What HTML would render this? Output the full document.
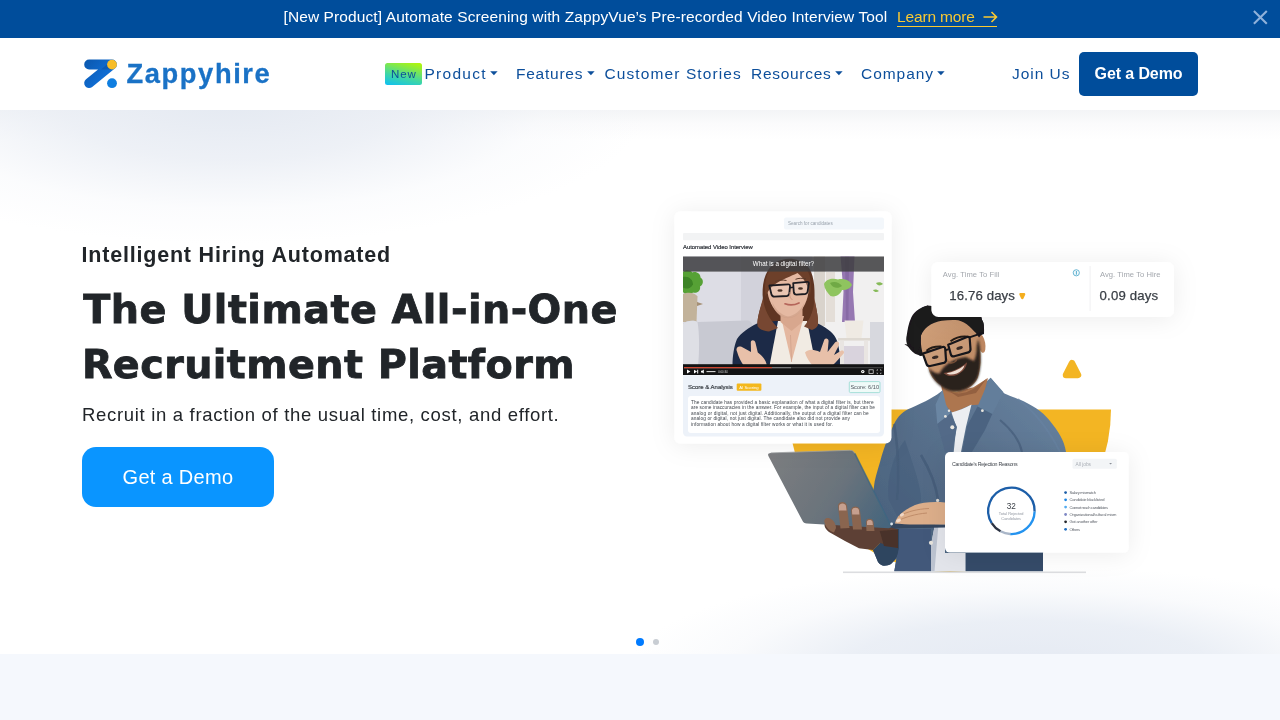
<!DOCTYPE html>
<html lang="en"><head><meta charset="utf-8"><title>Zappyhire</title>
<style>
*{box-sizing:border-box;margin:0;padding:0}
html,body{width:1280px;height:720px;overflow:hidden;background:#fff;font-family:"Liberation Sans",sans-serif;color:#212529}
.abs{position:absolute}
#hero,#nav,#banner,#below{will-change:transform}
#banner{position:absolute;left:0;top:0;width:1280px;height:38px;background:#004d9b;color:#fff}
#banner .t{position:absolute;left:283.5px;top:8px;font-size:15.5px;line-height:18px;white-space:nowrap;letter-spacing:0.1px}
#banner .lm{position:absolute;left:897px;top:8px;font-size:15.5px;line-height:18px;color:#f9c932;white-space:nowrap;border-bottom:1.5px solid #f9c932;height:19px;width:100px;letter-spacing:-0.15px}
#nav{position:absolute;left:0;top:38px;width:1280px;height:72px;background:#fff}
.ni{position:absolute;top:26.5px;font-size:15.5px;line-height:18px;color:#0d4f9b;white-space:nowrap}
.caret{position:absolute;top:6px;width:8px;height:5px;margin-left:-0.7px}
#hero{position:absolute;left:0;top:110px;width:1280px;height:544px;overflow:hidden;background:
radial-gradient(ellipse 400px 100px at 1030px 556px, rgba(229,234,243,1) 0%, rgba(231,236,244,.85) 45%, rgba(240,243,248,.38) 75%, rgba(255,255,255,0) 100%),
radial-gradient(ellipse 420px 140px at 230px -6px, rgba(229,234,242,1) 0%, rgba(233,237,244,.8) 40%, rgba(244,246,250,.35) 75%, rgba(255,255,255,0) 100%),
linear-gradient(180deg,#f3f4f6 0px,#fbfbfc 14px,#fff 30px),#fff}
#below{position:absolute;left:0;top:654px;width:1280px;height:66px;background:#f5f8fd}
</style></head><body>
<div id="banner">
 <div class="t">[New Product] Automate Screening with ZappyVue&rsquo;s Pre-recorded Video Interview Tool</div>
 <div class="lm">Learn more</div>
 <svg class="abs" style="left:983px;top:11px" width="15" height="12" viewBox="0 0 15 12"><path d="M0.5 6H13.5M8.5 1L13.5 6L8.5 11" stroke="#f9c932" stroke-width="1.6" fill="none"/></svg>
 <svg class="abs" style="left:1252px;top:8.5px" width="17" height="17" viewBox="0 0 17 17"><path d="M1.9 1.9L14.8 14.8M14.8 1.9L1.9 14.8" stroke="#8fb1da" stroke-width="2.1" fill="none"/></svg>
</div>
<div id="nav">
 <svg class="abs" style="left:80px;top:18px" width="44" height="36" viewBox="80 56 44 36">
  <defs><linearGradient id="lg1" x1="84" y1="60" x2="117" y2="88" gradientUnits="userSpaceOnUse"><stop offset="0" stop-color="#0b57ad"/><stop offset="0.55" stop-color="#0f6bd0"/><stop offset="1" stop-color="#1273dc"/></linearGradient></defs>
  <path d="M89.1 64.5H112L89.1 83.1" fill="none" stroke="url(#lg1)" stroke-width="9.8" stroke-linecap="round" stroke-linejoin="round"/>
  <path d="M101 69.4L107 64.5L112 69.4Z" fill="#0a3f86" opacity=".35"/><circle cx="112" cy="64.6" r="4.9" fill="#f8bd27"/>
  <circle cx="112" cy="83.2" r="4.9" fill="#0f7ee0"/>
 </svg>
 <div id="logot" class="abs" style="left:126.5px;top:20.5px;font-size:27.3px;line-height:30px;font-weight:700;color:#1a72c6;letter-spacing:1.6px;-webkit-text-stroke:0.3px #1a72c6;white-space:nowrap">Zappyhire</div>
 <div class="abs" id="newb" style="left:385px;top:25px;width:37px;height:22px;border-radius:2.5px;background:linear-gradient(14deg,#0cbff5 0%,#3fd6a5 38%,#7fe84e 70%,#b8f700 100%);color:#0d4f9b;font-size:11.5px;line-height:22px;text-align:center;letter-spacing:0.9px;text-indent:0.9px">New</div>
 <div class="ni" id="n1" style="left:424.5px;letter-spacing:1.27px">Product<svg class="caret" style="left:66px" viewBox="0 0 8 5"><path d="M0.2 0.3H7.6L3.9 4.3Z" fill="#0d4f9b"/></svg></div>
 <div class="ni" id="n2" style="left:516px;letter-spacing:0.76px">Features<svg class="caret" style="left:71.5px" viewBox="0 0 8 5"><path d="M0.2 0.3H7.6L3.9 4.3Z" fill="#0d4f9b"/></svg></div>
 <div class="ni" id="n3" style="left:604.5px;letter-spacing:1.1px">Customer Stories</div>
 <div class="ni" id="n4" style="left:751px;letter-spacing:0.71px">Resources<svg class="caret" style="left:85px" viewBox="0 0 8 5"><path d="M0.2 0.3H7.6L3.9 4.3Z" fill="#0d4f9b"/></svg></div>
 <div class="ni" id="n5" style="left:861px;letter-spacing:0.95px">Company<svg class="caret" style="left:77px" viewBox="0 0 8 5"><path d="M0.2 0.3H7.6L3.9 4.3Z" fill="#0d4f9b"/></svg></div>
 <div class="ni" id="n6" style="left:1012px;letter-spacing:0.97px">Join Us</div>
 <div class="abs" id="navbtn" style="left:1079px;top:14px;width:119px;height:44px;border-radius:5px;background:#004d9b;color:#fff;font-size:16px;font-weight:700;line-height:44px;text-align:center;letter-spacing:-0.1px">Get a Demo</div>
</div>
<div id="hero">
<svg class="abs" id="art" style="left:640px;top:0" width="640" height="544" viewBox="640 110 640 544" font-family="'Liberation Sans',sans-serif">
<defs>
 <filter id="sh" x="-40%" y="-40%" width="180%" height="180%"><feDropShadow dx="0" dy="2" stdDeviation="12" flood-color="#10141c" flood-opacity="0.075"/></filter>
 <filter id="soft" x="-5%" y="-5%" width="110%" height="110%"><feGaussianBlur stdDeviation="0.45"/></filter>
 <filter id="bsoft" x="-10%" y="-10%" width="120%" height="120%"><feGaussianBlur stdDeviation="0.9"/></filter>
 <filter id="soft2" x="-5%" y="-5%" width="110%" height="110%"><feGaussianBlur stdDeviation="0.4"/></filter>
 <clipPath id="vclip"><rect x="683" y="256.5" width="201" height="118.5"/></clipPath>
 <linearGradient id="lapg" x1="775" y1="455" x2="885" y2="525" gradientUnits="userSpaceOnUse"><stop offset="0" stop-color="#7b7d80"/><stop offset="0.55" stop-color="#6a737b"/><stop offset="1" stop-color="#46657d"/></linearGradient>
 <linearGradient id="shirtg" x1="1050" y1="395" x2="890" y2="560" gradientUnits="userSpaceOnUse"><stop offset="0" stop-color="#67819e"/><stop offset="0.45" stop-color="#58708c"/><stop offset="1" stop-color="#48607b"/></linearGradient>
 <linearGradient id="skin1" x1="925" y1="325" x2="980" y2="385" gradientUnits="userSpaceOnUse"><stop offset="0" stop-color="#cf9f79"/><stop offset="1" stop-color="#b8845e"/></linearGradient>
</defs>
<!-- YELLOW -->
<path id="yel" d="M789 409.5H1111A161 162.5 0 0 1 789 409.5Z" fill="#f3b523"/>
<!-- PERSON -->
<g id="person" filter="url(#soft)">
 <!-- shirt body -->
 <path d="M942.5 390.6C936 396 925 402 911.6 407.8C903 411 897.8 416.4 894 424C889 434 884 447.3 880 462C877 472 874.5 480 873.9 487C873 493 872 497 874 503L886 527L880 543L873 550L878 562C880 564.5 882 565.7 884 565.7C887 565.7 889 565 891 564L896.5 558.5L895.7 563L894.3 571.3H1043V553L1066 452C1064 440 1059 432 1049 419.8C1043 412 1032 404.4 1018 399C1010 396 1003 393 1002.7 392.3L990.6 377.7L975 392L955 400Z" fill="url(#shirtg)"/>
 <!-- darker lower-left body / sleeve -->
 <path d="M886 527L899 529L899 548C899 554 897 558 891 564C889 565 887 565.7 884 565.7C882 565.7 880 564.5 878 562L873 550L880 543Z" fill="#2f445f"/>
 <path d="M899 529H931L931 571.3H894.3L895.7 563L899 548Z" fill="#42597a"/>
 <path d="M965.5 553H1043V571.3H965.5Z" fill="#364c69"/>
 <!-- tee bottom -->
 <path d="M935 524H945V553H965.5V571.3H931V545Z" fill="#e3e5eb"/>
 <path d="M935 524H938.5L934.5 571.3H931V545Z" fill="#bcc3d0"/>
 <!-- neck -->
 <path d="M941 384L956.3 391.5L973.4 387.2L988 378L981 404.4L970 405.2L952.8 413L944 404Z" fill="#ad7650"/>
 <path d="M943 387C952 396 966 396 980 384L987 378L976 393L958 397Z" fill="#7d4e33" opacity=".55"/>
 <!-- white tee top -->
 <path d="M951.5 412.5C958 411 965 408 971.5 404.5L966 426.7L961 452H953.7L956.3 426.7Z" fill="#eceef1"/>
 <!-- collar -->
 <path d="M942.5 389.5L935.6 404.4L937.3 424L950.5 413.5L946 404.4Z" fill="#6b86a3"/>
 <path d="M990.6 377.7L1003.5 392.3L992.3 414L977.5 406.5L984.5 390.6Z" fill="#637e9b"/>
 <path d="M937.3 424L950.5 413.5L957 427L952 452H945Z" fill="#526b88"/>
 <path d="M977.5 406.5L992.3 414L985 430L972 452H962L967 426Z" fill="#4c6481"/>
 <!-- shirt folds -->
 <path d="M894 424C897 440 900 470 897 500" stroke="#3d5572" stroke-width="2.5" fill="none" opacity=".5"/>
 <path d="M1018 399C1035 412 1050 432 1060 452" stroke="#6884a3" stroke-width="2" fill="none" opacity=".5"/>
 <path d="M1000 420C1012 430 1020 442 1022 452" stroke="#3b526f" stroke-width="2" fill="none" opacity=".5"/>
 <path d="M905 440C915 470 922 490 921 502L897 516L889 500C886 480 893 455 905 440Z" fill="#435c7a" opacity=".5"/>
 <path d="M921 455C930 470 936 485 938 500" stroke="#3a506d" stroke-width="2.5" fill="none" opacity=".5"/>
 <!-- buttons -->
 <circle cx="945.4" cy="416.4" r="1.4" fill="#e9e6df"/><circle cx="949" cy="410.7" r="1.2" fill="#e9e6df"/><circle cx="982.4" cy="410.7" r="1.4" fill="#e9e6df"/><circle cx="952.3" cy="427.3" r="2" fill="#ece9e2"/><circle cx="931" cy="542.8" r="2.1" fill="#e6e3dc"/><circle cx="937.6" cy="500.4" r="1.6" fill="#d9d6cf"/>
 <!-- ear -->
 <ellipse cx="981.6" cy="343.5" rx="3.6" ry="9.5" fill="#bd8660" transform="rotate(-10 981.6 343.5)"/>
 <!-- hair back -->
 <path d="M931.7 306.1L927.8 305.6C921 307 915 311 911.5 317C908.5 323 907.5 330 906.8 335C906 338 906 341 907 344C908.5 348 911.5 351.5 915 353.8L921 356L984 334C984.3 328 984 323 982 320L980 312H931.7Z" fill="#1c1a1e"/>
 <!-- face -->
 <path d="M920.8 336C922 329 927 323.5 934 321C942 318.8 952 318.5 960 320C968 322 974 327 977.5 334C980 341 981 352 980.6 362.5C980 369 979 374 977.8 377.8C976 382 973 385 969.4 387.5C965 390.5 960 391.7 955.6 391.7C950 391.5 945.5 389 941.7 386.1C938 383.5 935 381 932.6 377.8C930.5 374.5 929 371 927.8 366.7C925 361 923 356 922.2 351.4C921 346 920.5 341 920.8 336Z" fill="url(#skin1)"/>
 <!-- beard (soft) -->
 <g filter="url(#bsoft)">
  <path d="M928.5 368C930 373 932 377 934.5 380C938 384.5 943 388.5 949 390.5C954 392 960 391.5 965 389.5C971 387 975.5 382.5 978 377C980 371 981 363 980.5 355C980.3 349 979.5 343 978 339L976.6 347C976.8 352 976 357 974 361C971 359.8 968.5 358.2 966 357.2C961 357.3 955 359.5 949.5 362.8C945 365.5 941.5 369.5 939.5 373.5C935.5 373.5 931.5 371.5 928.5 368Z" fill="#2b201c"/>
  <path d="M940.5 372.5C944 366.5 950 362 957 359.5C961 358.2 964.5 357.5 967.5 358L968.5 362.5C961 364 952 368 944 374.5Z" fill="#2b201c"/>
 </g>
 <!-- mouth -->
 <path d="M943.5 373C951 372.3 960 368.5 967 362.3C966.5 367.5 963 372 957.5 374.8C952.5 377 946.5 376.5 943.5 373Z" fill="#7c4a3c"/>
 <path d="M946.5 373.3C952.5 372.3 959 369.5 964.5 365.2C963.8 368.6 961 371.6 956.8 373.4C952.8 375 948.7 374.9 946.5 373.3Z" fill="#efdfd3"/>
 <!-- nose shading -->
 <path d="M946.5 350C945.5 356 946 361 949.5 362.7C952.5 363.5 955.5 362 957 359.5" stroke="#9a6644" stroke-width="1.4" fill="none" opacity=".65"/>
 <!-- hair front -->
 <path d="M920.8 345L920.8 336C922.5 331.5 925 328.5 927.8 326.4C932 323.5 937 321.5 941.7 320.8C947 320 953 320 958.3 320.2C962 321 966 323.5 969.4 326.4C972 329 974 331 975.7 332.7L979 337.5L983.5 332C984.3 326 984 322 982 320L980 312H931.7L927.8 305.6C919 308 913 315 910.5 323C908 331 907.5 339 911 346L917 352.5Z" fill="#1c1a1e"/>
 <path d="M913.5 348C910 345 906.5 343.5 904.5 344.5C907 345.5 910 348 913 351.5Z" fill="#1c1a1e"/>
 <!-- eyes & brows -->
 <path d="M926.5 350.8C930 347.8 936 346.3 941.5 346.6" stroke="#241a16" stroke-width="2" fill="none"/>
 <path d="M950.5 341.2C955.5 337.7 962 336 968 336.8" stroke="#241a16" stroke-width="2" fill="none"/>
 <ellipse cx="935.2" cy="357.3" rx="3.3" ry="1.6" fill="#2a1c16" transform="rotate(-14 935.2 357.3)"/>
 <ellipse cx="959.6" cy="348" rx="3.3" ry="1.6" fill="#2a1c16" transform="rotate(-16 959.6 348)"/>
 <!-- glasses -->
 <g fill="rgba(255,255,255,0.07)" stroke="#17161a" stroke-width="2.2" stroke-linejoin="round">
  <path d="M922.8 353.6L942.6 347C944.1 346.6 945 347.3 945.2 348.7L946 360C946 361.5 945.3 362.5 943.8 362.9L930.2 366C928.2 366.4 927 365.7 926.5 363.9Z"/>
  <path d="M948.2 344.8L967 337C968.5 336.5 969.4 337.1 969.7 338.5L970.5 349.3C970.5 350.8 969.8 351.8 968.3 352.4L954.3 356.3C952.4 356.7 951.2 356 950.8 354.2Z"/>
 </g>
 <path d="M945.3 350.3L948.6 349.1M968.8 337.6L983.3 332.6M923 353.6L919.5 355" stroke="#17161a" stroke-width="1.9" fill="none"/>
 <!-- laptop base -->
 <path d="M888 523.5L945 524.3V527.6L892 528.6Z" fill="#34465e"/>
 <!-- right hand (typing) -->
 <path d="M895 523.5C896 517 902 511 915 505C922 502.5 932 501.5 945 502.5V524.5H915C908 524.5 900 524 895 523.5Z" fill="#dcae8a"/>
 <path d="M897 521C906 517 915 514 927 513M899 516C908 511.5 917 509 929 508.5" stroke="#b98462" stroke-width="1" fill="none" opacity=".8"/>
 <ellipse cx="898.5" cy="520.5" rx="2.6" ry="1.7" fill="#f3dccb" transform="rotate(-25 898.5 520.5)"/>
 <ellipse cx="902" cy="514.8" rx="2.2" ry="1.5" fill="#f0d6c4" transform="rotate(-30 902 514.8)"/>
 <!-- left hand palm (below lid) -->
 <path d="M825 521C823.5 525 825 529 829 532L845 541L859 548.3L873 550L880 543L898 548V529.5L889 527L835 524Z" fill="#5d4034"/>
 <path d="M879.7 531L898 529.5V548L884 546Z" fill="#4a3229"/>
 <!-- laptop lid -->
 <path d="M770.8 452.9L849.8 450.3C852.3 450.3 853.7 451.2 854.7 453.3L890.7 525C891.6 527 890.6 528.3 888.5 528.2L807 523.5C804.6 523.3 803.2 522.4 802.2 520.2L768.4 456C767.5 454.1 768.5 453 770.8 452.9Z" fill="url(#lapg)"/>
 <path d="M854.7 453.3L890.7 525" stroke="#3f6782" stroke-width="1.6" fill="none" opacity=".8"/>
 <path d="M770.8 452.9L849.8 450.3C852.3 450.3 853.7 451.2 854.7 453.3" stroke="#a1a3a5" stroke-width=".8" fill="none"/>
 <circle cx="891.6" cy="524" r="1.4" fill="#dfe5ea"/>
 <!-- left hand fingers (over lid) -->
 <g fill="#8a6550">
  <path d="M824.5 522.5C823.5 519 826.5 517 830 518.5C833.5 520 836 524 836 528L834 532.5C830 531.5 826 528 824.5 522.5Z"/>
  <path d="M838 506C838 500.5 846.5 500.5 847 506L849.5 528L840.5 528.5Z"/>
  <path d="M851 510.5C851 505 859.5 505 860 510.5L862 529.5L853 529.5Z"/>
  <path d="M866 522C866 517.5 873 517.5 873.5 522L874.5 531L866.5 531Z"/>
 </g>
 <path d="M839 506C839.3 502.5 845.7 502.5 846 506L846.5 510.5H839ZM852 510.3C852.3 507 858.7 507 859 510.3L859.4 514.5H852.2ZM867 521.8C867.2 519.3 872 519.3 872.5 521.8L872.9 525H867Z" fill="#c6a08f"/>
</g>
<!-- floor line -->
<rect x="843" y="571.5" width="243" height="1.6" fill="#dcdde0"/>
<!-- CARD 1 -->
<g id="card1">
 <rect x="674.5" y="211.5" width="217" height="232" rx="6" fill="#fff" filter="url(#sh)"/>
 <rect x="784" y="217.5" width="100" height="12" rx="2" fill="#f3f7fb"/>
 <text x="788" y="225.2" font-size="4.6" fill="#9aa3ad">Search for candidates</text>
 <rect x="683" y="233" width="201" height="7.2" rx="1" fill="#f2f3f4"/>
 <text x="683" y="249.2" font-size="5.9" fill="#2d3138" stroke="#2d3138" stroke-width=".18" textLength="69.7" lengthAdjust="spacing">Automated Video Interview</text>
 <g clip-path="url(#vclip)">
  <g filter="url(#soft2)">
  <rect x="680" y="254" width="207" height="124" fill="#dddde5"/>
  <rect x="741" y="254" width="40" height="75" fill="#d2d2db"/>
  <rect x="812" y="254" width="75" height="124" fill="#f1f0f0"/>
  <rect x="814" y="256" width="11" height="70" fill="#cfc6bc" opacity=".7"/>
  <rect x="826" y="272" width="9" height="50" fill="#e4ded8"/>
  <!-- curtain -->
  <path d="M840.5 256H854.5L853 292L855 322H842L843.5 292Z" fill="#9678b2"/>
  <path d="M845 256H849L848.5 321H846Z" fill="#7f609d" opacity=".6"/>
  <!-- right plant -->
  <path d="M824 284C826 279 833 277.5 838 279.5C843 278 850 280 852 285C850 289 846 290.5 842 290C840 295 835 297.5 830.5 296C827 292.5 824.5 289 824 284Z" fill="#8fc45e"/>
  <path d="M830 283C834 281 839 282 842 286C838 289 833 288.5 830 283Z" fill="#6fa944"/>
  <path d="M876 283C878.5 281.5 881.5 282 883 284C880.5 286 877.5 286 876 283ZM873 290C875 289 877.5 289.5 879 291C877 292.5 874.5 292.5 873 290Z" fill="#86ba58"/>
  <!-- right furniture -->
  <path d="M844.5 320.5H863.5L861.5 338.5H846.5Z" fill="#efeae3"/>
  <rect x="838" y="338" width="32" height="2.6" fill="#ded9d2"/>
  <rect x="840" y="340.6" width="4" height="24" fill="#e9e5e2"/><rect x="864" y="340.6" width="4" height="24" fill="#e9e5e2"/>
  <rect x="844" y="346" width="20" height="18" fill="#d9d3dd"/>
  <rect x="870" y="322" width="17" height="43" fill="#d7d8de"/>
  <!-- left plant + basket -->
  <path d="M683 272C686 269.5 690 270 692.5 272.5C696 271 700.5 273.5 700.5 277.5C704 279.5 703.5 285 700 286.5C701 290.5 697 294 693 292.5C690 295.5 685 295 683 292Z" fill="#57a135"/>
  <path d="M683 277C688 275.5 693 279 693 284.5C690.5 289 685.5 289.5 683 287.5Z" fill="#3c8425"/>
  <path d="M683 294C688 291.5 695.5 292.5 697.5 296.5L696.5 322H683Z" fill="#c2b29a"/>
  <path d="M697 302L703 304L697 306Z" fill="#a58f74"/>
  <!-- sofa -->
  <path d="M683 324C686 320.5 694 320 698 322L747 320.5C750.5 320.5 752.5 323 752.5 327V366H683Z" fill="#c8c9d2"/>
  <path d="M683 324C686 320.5 694 320 697.5 322C699.5 333 699.5 352 698 366H683Z" fill="#dedfe5"/>
  <!-- woman hair back -->
  <path d="M763 300C761.5 286 764 271 774 263.5C784 256.5 799 257.5 807 265.5C814 273 815 287 814.5 300C816 308 818.5 316 818 325C815 329 809 330.5 803 328L790 322L776 329C769 332 761 330 757.5 326C757 317 760.5 308 763 300Z" fill="#5e3523"/>
  <!-- blazer -->
  <path d="M757 323.6C749 327.5 741 333 737 339C734 346 732.5 356 732.5 366H840C840 360 840 356 839.5 352C838.5 345 837 339 834 335.3C830 330 823.5 326.5 817.8 323.6L800 321H775Z" fill="#1d2b46"/>
  <!-- blouse -->
  <path d="M778 321L807 321L816 366H769.5Z" fill="#f1ebe3"/>
  <!-- chest skin V -->
  <path d="M780.8 316L804 316L791.5 362Z" fill="#e4b79f"/>
  <path d="M791.5 362L790.5 335" stroke="#c99a84" stroke-width=".6" fill="none"/>
  <!-- neck -->
  <path d="M780.5 308H802.5V322L791.5 331L780.5 322Z" fill="#d8a78e"/>
  <!-- face -->
  <path d="M767.3 289C767 277.5 775.5 269.5 788 269.5C800.5 269.5 809 277.5 808.7 289C808.3 299.5 803.5 309.5 797 314.5C792 318.3 784.5 318.3 779.5 314.5C773 309.5 767.7 299.5 767.3 289Z" fill="#e5b9a2"/>
  <path d="M772 302C776 310 781 315 788 316.5C795 315.5 800.5 310.5 804.5 302.5C802.5 311 797.5 317.5 788 318.3C779 317.5 774 311 772 302Z" fill="#cf9f88" opacity=".7"/>
  <!-- hair front -->
  <path d="M765.5 296C763 281 767.5 267.5 779 263C791 259 805.5 263.5 809.5 275C811.5 282 811 290 810 296C808.5 286.5 804.5 278.5 797.5 273C791.5 276 781.5 279.5 774.5 284.5C770 288 767.5 292 765.5 296Z" fill="#6d3f2a"/>
  <path d="M763 298C764 308 768 318 778 328L769 331.5C763 331 759 329 757.5 326C757 317 760.5 308 763 298Z" fill="#774730"/>
  <path d="M814.5 298C814 309 811 318 804 326.5L812 330C815 329 817 327 818 325C818.5 316 816 308 814.5 298Z" fill="#774730"/>
  <!-- glasses -->
  <g fill="rgba(255,255,255,0.18)" stroke="#1e1d22" stroke-width="1.8" stroke-linejoin="round">
   <path d="M769.3 285.5L788.3 284.3C789.5 284.3 790.1 284.9 790 286.1L789.3 293.6C789.1 295 788.3 295.8 786.9 296L774.5 296.6C772.8 296.6 771.8 295.8 771.4 294.2Z"/>
   <path d="M793.2 283.2L807.3 281.8C808.5 281.8 809 282.4 808.8 283.6L807.6 291.6C807.3 293 806.5 293.8 805.1 294L796.5 294.6C794.9 294.6 794 293.8 793.8 292.2Z"/>
  </g>
  <path d="M790 287.8L793.3 287.3" stroke="#1e1d22" stroke-width="1.4"/>
  <ellipse cx="780" cy="290.5" rx="2.6" ry="1.3" fill="#4a3328"/><ellipse cx="800.5" cy="288.5" rx="2.4" ry="1.3" fill="#4a3328"/>
  <path d="M775 281.5C778 280 783 279.7 786.5 280.5M795.5 279.3C798.5 278 803 278 806 279" stroke="#5a3a2a" stroke-width="1" fill="none"/>
  <path d="M785 303.8C789 305.3 795 305 799 303" stroke="#b5655a" stroke-width="1.7" fill="none" stroke-linecap="round"/>
  <path d="M790 292C789.5 296 790 299 792.5 299.5" stroke="#c99680" stroke-width=".9" fill="none"/>
  <!-- hands -->
  <path d="M737 351.5C735.5 348 738 345.5 741.5 346.8L751 352L750.8 342.5C750.8 339.5 754.6 339.5 755.4 342.5L757.8 352.5C762 355.5 766 359.5 767 366H744C741 362 738.5 357 737 351.5Z" fill="#e8c0a9"/>
  <path d="M805 352.5C808.5 348.5 814 349 820 352L824.2 340C825.2 337.6 828.6 338.1 828.6 341L827.6 352L835 342.5C837 340.5 840 342 839 345L834 355L841.5 350.5C843.5 350 845 352 843.2 354L836 362L832 366H813C809.5 362 806.5 357.5 805 352.5Z" fill="#e8c0a9"/>
  </g>
  <!-- header bar -->
  <rect x="683" y="256" width="201" height="15.6" fill="#3e3e40" opacity=".86"/>
  <text x="752.8" y="266.3" font-size="6.5" fill="#fff" textLength="61.2" lengthAdjust="spacingAndGlyphs">What is a digital filter?</text>
  <!-- controls -->
  <rect x="683" y="364.2" width="201" height="11" fill="#131314"/>
  <rect x="684" y="367.2" width="199" height="1" fill="#4a4a4a"/>
  <rect x="684" y="367.2" width="107" height="1" fill="#8a8a8a"/>
  <rect x="684" y="367.2" width="88" height="1" fill="#e0391f"/>
  <path d="M687 369.6L690.4 371.6L687 373.6Z" fill="#fff"/>
  <path d="M694 369.7L697 371.6L694 373.5ZM697.2 369.7H698.2V373.5H697.2Z" fill="#fff"/>
  <path d="M701 370.8H702.2L703.8 369.6V373.6L702.2 372.4H701Z" fill="#fff"/>
  <rect x="706.5" y="371.2" width="9" height=".9" fill="#fff"/>
  <text x="718.2" y="372.8" font-size="2.8" fill="#ddd">0:00:34</text>
  <circle cx="862.8" cy="371.6" r="1.7" fill="#fff"/><circle cx="862.8" cy="371.6" r=".6" fill="#131314"/>
  <rect x="869" y="369.8" width="4.2" height="3.6" fill="none" stroke="#e8e8e8" stroke-width=".7"/>
  <path d="M877 370.8V369.8H878M880 369.8H881V370.8M881 372.6V373.6H880M878 373.6H877V372.6" stroke="#e8e8e8" stroke-width=".6" fill="none"/>
 </g>
 <!-- analysis -->
 <path d="M683 375.2H884V432C884 434.5 882.5 436.5 880 436.5H687C684.5 436.5 683 434.5 683 432Z" fill="#edf2f9"/>
 <text x="688" y="388.9" font-size="6" fill="#3b4047" stroke="#3b4047" stroke-width=".18" textLength="44.8" lengthAdjust="spacing">Score &amp; Analysis</text>
 <rect x="736.7" y="383.4" width="24.7" height="7.4" rx="1" fill="#f4b81d"/>
 <text x="749" y="388.7" font-size="4.2" fill="#fff" text-anchor="middle">AI Scoring</text>
 <rect x="849.3" y="381.6" width="30.7" height="11" rx="1.2" fill="#effaf8" stroke="#86d6cb" stroke-width=".7"/>
 <text x="864.7" y="389.1" font-size="5.6" fill="#50565e" text-anchor="middle">Score: 6/10</text>
 <rect x="688" y="396" width="192" height="37" rx="3" fill="#fff"/>
 <g font-size="4.75" fill="#41464d">
  <text x="691" y="403.7" textLength="182.6" lengthAdjust="spacing">The candidate has provided a basic explanation of what a digital filter is, but there</text>
  <text x="691" y="409.2" textLength="184" lengthAdjust="spacing">are some inaccuracies in the answer. For example, the input of a digital filter can be</text>
  <text x="691" y="414.7" textLength="177.7" lengthAdjust="spacing">analog or digital, not just digital. Additionally, the output of a digital filter can be</text>
  <text x="691" y="420.3" textLength="158.9" lengthAdjust="spacing">analog or digital, not just digital. The candidate also did not provide any</text>
  <text x="691" y="425.8" textLength="142" lengthAdjust="spacing">information about how a digital filter works or what it is used for.</text>
 </g>
</g>
<!-- CARD 2 -->
<g id="card2">
 <rect x="931.5" y="262" width="242.5" height="55" rx="7" fill="#fff" filter="url(#sh)"/>
 <text x="942.8" y="277.4" font-size="7.6" fill="#a3a7ad" textLength="56.7" lengthAdjust="spacing">Avg. Time To Fill</text>
 <text x="949.3" y="300" font-size="13.2" fill="#3a3f46" stroke="#3a3f46" stroke-width=".25" textLength="65.6" lengthAdjust="spacing">16.76 days</text>
 <path d="M1020.6 294.3H1024L1022.3 297.9Z" fill="#f4ae1f" stroke="#f4ae1f" stroke-width="2.6" stroke-linejoin="round"/>
 <circle cx="1076.3" cy="272.8" r="3.1" fill="#f2fafd" stroke="#49a6c9" stroke-width=".8"/>
 <rect x="1075.9" y="271" width=".9" height="3.7" fill="#49a6c9"/>
 <rect x="1089.6" y="266" width="1" height="45" fill="#f1f1f2"/>
 <text x="1100" y="277.4" font-size="7.6" fill="#a3a7ad" textLength="60.5" lengthAdjust="spacing">Avg. Time To Hire</text>
 <text x="1099.6" y="300" font-size="13.2" fill="#3a3f46" stroke="#3a3f46" stroke-width=".25" textLength="58.6" lengthAdjust="spacing">0.09 days</text>
</g>
<!-- TRIANGLE -->
<path d="M1066 376.2L1072 364.5L1078 376.2Z" fill="#f3b523" stroke="#f3b523" stroke-width="6.5" stroke-linejoin="round" transform="translate(0,-1.3)"/>
<!-- CARD 3 -->
<g id="card3">
 <rect x="945" y="452" width="183.5" height="100.6" rx="5" fill="#fff" filter="url(#sh)"/>
 <text x="952" y="465.7" font-size="5.3" fill="#41464d" textLength="65.6" lengthAdjust="spacing">Candidate's Rejection Reasons</text>
 <rect x="1072.5" y="458.8" width="44.3" height="10" rx="1.5" fill="#f3f5f7"/>
 <text x="1075.5" y="465.5" font-size="4.8" fill="#a9aeb5">All jobs</text>
 <path d="M1109.2 463L1110.6 464.6L1112 463Z" fill="#8b9098"/>
 <g fill="none" stroke-width="2.3">
  <path d="M991.7 523.1A23.2 23.2 0 1 1 1034.6 511.6" stroke="#1c5ea8"/>
  <path d="M1034.6 511.6A23.2 23.2 0 0 1 1010.2 534.0" stroke="#2493ef"/>
  <path d="M1010.2 534.0A23.2 23.2 0 0 1 1000.5 531.3" stroke="#a9b6c8"/>
  <path d="M1000.5 531.3A23.2 23.2 0 0 1 991.7 523.1" stroke="#2b3242"/>
 </g>
 <text x="1011.2" y="509.2" font-size="8.2" fill="#3c4148" text-anchor="middle">32</text>
 <text x="1011.2" y="515" font-size="3.9" fill="#9096a0" text-anchor="middle">Total Rejected</text>
 <text x="1011.2" y="519.6" font-size="3.9" fill="#9096a0" text-anchor="middle">Candidates</text>
 <g font-size="4.1" fill="#5a5f67">
  <circle cx="1065.6" cy="492.6" r="1.4" fill="#1c5ea8"/><text x="1069.5" y="494" textLength="26.5" lengthAdjust="spacing">Salary mismatch</text>
  <circle cx="1065.6" cy="499.8" r="1.4" fill="#1e86e4"/><text x="1069.5" y="501.2" textLength="35" lengthAdjust="spacing">Candidate blacklisted</text>
  <circle cx="1065.6" cy="507.1" r="1.4" fill="#55acf0"/><text x="1069.5" y="508.5" textLength="38.5" lengthAdjust="spacing">Cannot reach candidates</text>
  <circle cx="1065.6" cy="514.5" r="1.4" fill="#7f88c4"/><text x="1069.5" y="515.9" textLength="47" lengthAdjust="spacing">Organizational/cultural mism</text>
  <circle cx="1065.6" cy="521.8" r="1.4" fill="#24272c"/><text x="1069.5" y="523.2" textLength="28" lengthAdjust="spacing">Got another offer</text>
  <circle cx="1065.6" cy="529.3" r="1.4" fill="#1f6dc0"/><text x="1069.5" y="530.7" textLength="10.5" lengthAdjust="spacing">Others</text>
 </g>
</g>
</svg>
 <div class="abs" id="h0" style="left:81.5px;top:131px;font-size:21.5px;font-weight:700;line-height:28px;letter-spacing:0.8px;white-space:nowrap;color:#212529">Intelligent Hiring Automated</div>
 <div class="abs" id="h1a" style="left:83.2px;top:171.7px;letter-spacing:0.47px;-webkit-text-stroke:0.8px #212529;font-family:'DejaVu Sans','Liberation Sans',sans-serif;font-size:39.7px;font-weight:700;line-height:54px;white-space:nowrap;color:#212529">The Ultimate All-in-One</div>
 <div class="abs" id="h1b" style="left:81.9px;top:226.7px;letter-spacing:0.42px;-webkit-text-stroke:0.8px #212529;font-family:'DejaVu Sans','Liberation Sans',sans-serif;font-size:39.7px;font-weight:700;line-height:54px;white-space:nowrap;color:#212529">Recruitment Platform</div>
 <div class="abs" id="hp" style="left:82px;top:291.6px;font-size:18.5px;line-height:26px;letter-spacing:0.685px;white-space:nowrap;color:#212529">Recruit in a fraction of the usual time, cost, and effort.</div>
 <div class="abs" id="hbtn" style="left:82px;top:337px;width:192px;height:60px;border-radius:14px;background:#0a95ff;color:#fff;font-size:20px;line-height:60px;text-align:center;letter-spacing:0.3px">Get a Demo</div>
 <div class="abs" style="left:636px;top:528px;width:8px;height:8px;border-radius:50%;background:#007bff"></div>
 <div class="abs" style="left:653px;top:529px;width:6px;height:6px;border-radius:50%;background:#c8cdd3"></div>
</div>
<div id="below"></div>
</body></html>
